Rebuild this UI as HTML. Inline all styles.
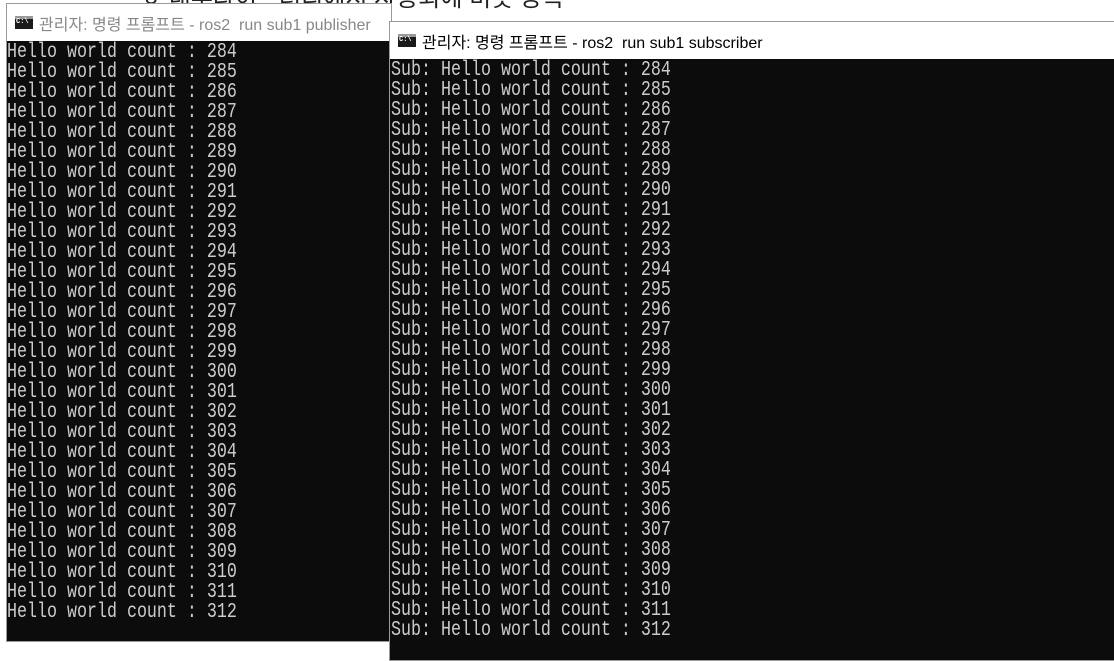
<!DOCTYPE html>
<html><head><meta charset="utf-8"><style>
*{margin:0;padding:0;box-sizing:border-box}
body{width:1114px;height:643px;background:#fff;position:relative;overflow:hidden;font-family:"Liberation Sans","Noto Sans CJK KR",sans-serif}
.win{position:absolute;background:#0c0c0c;border:1px solid #9a9a9a}
.title{position:absolute;left:0;right:0;top:0;background:#fff;color:#000;font-size:16px;display:flex;align-items:center;padding-left:8px}
.title .ic{width:18px;height:13px;background:#1a1a1a;border-top:3px solid #999;margin-right:6px;position:relative}
.title .ic:after{content:"C:\\";position:absolute;left:1px;top:-1px;font:bold 7px "Liberation Mono",monospace;color:#fff}
.con{position:absolute;left:0;color:#cccccc;font-family:"Liberation Mono",monospace;font-size:16.67px;line-height:16px;white-space:pre;transform:scaleY(1.25);transform-origin:0 0}
</style></head><body>
<div style="position:absolute;left:140px;top:-22px;font-size:24px;color:#222">ㅎ  내부라이브러리에서 사용되에 비롯   등록</div>
<div class="win" style="left:6px;top:3px;width:386px;height:639px">
 <div class="title" style="height:37px;color:#888"><span class="ic"></span>관리자: 명령 프롬프트 - ros2&nbsp; run sub1 publisher</div>
 <div class="con" style="top:39px;left:0px">Hello world count : 284
Hello world count : 285
Hello world count : 286
Hello world count : 287
Hello world count : 288
Hello world count : 289
Hello world count : 290
Hello world count : 291
Hello world count : 292
Hello world count : 293
Hello world count : 294
Hello world count : 295
Hello world count : 296
Hello world count : 297
Hello world count : 298
Hello world count : 299
Hello world count : 300
Hello world count : 301
Hello world count : 302
Hello world count : 303
Hello world count : 304
Hello world count : 305
Hello world count : 306
Hello world count : 307
Hello world count : 308
Hello world count : 309
Hello world count : 310
Hello world count : 311
Hello world count : 312</div>
</div>
<div class="win" style="left:389px;top:21px;width:740px;height:640px">
 <div class="title" style="height:37px"><span class="ic"></span>관리자: 명령 프롬프트 - ros2&nbsp; run sub1 subscriber</div>
 <div class="con" style="top:39px;left:1px">Sub: Hello world count : 284
Sub: Hello world count : 285
Sub: Hello world count : 286
Sub: Hello world count : 287
Sub: Hello world count : 288
Sub: Hello world count : 289
Sub: Hello world count : 290
Sub: Hello world count : 291
Sub: Hello world count : 292
Sub: Hello world count : 293
Sub: Hello world count : 294
Sub: Hello world count : 295
Sub: Hello world count : 296
Sub: Hello world count : 297
Sub: Hello world count : 298
Sub: Hello world count : 299
Sub: Hello world count : 300
Sub: Hello world count : 301
Sub: Hello world count : 302
Sub: Hello world count : 303
Sub: Hello world count : 304
Sub: Hello world count : 305
Sub: Hello world count : 306
Sub: Hello world count : 307
Sub: Hello world count : 308
Sub: Hello world count : 309
Sub: Hello world count : 310
Sub: Hello world count : 311
Sub: Hello world count : 312</div>
</div>
</body></html>
